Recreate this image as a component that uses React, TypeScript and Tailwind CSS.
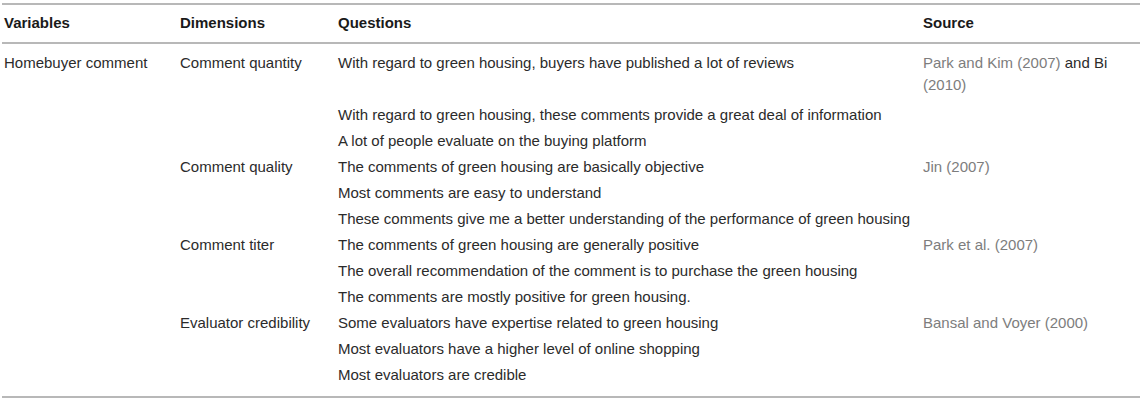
const rows: { variable?: string; dimension?: string; question: string; source?: React.ReactNode; first?: boolean }[] = [
  {
    variable: 'Homebuyer comment',
    dimension: 'Comment quantity',
    question: 'With regard to green housing, buyers have published a lot of reviews',
    source: (
      <>
        <span className="text-[#7d7d7d]">Park and Kim (2007)</span> and Bi <span className="text-[#7d7d7d]">(2010)</span>
      </>
    ),
    first: true,
  },
  { question: 'With regard to green housing, these comments provide a great deal of information' },
  { question: 'A lot of people evaluate on the buying platform' },
  {
    dimension: 'Comment quality',
    question: 'The comments of green housing are basically objective',
    source: <span className="text-[#7d7d7d]">Jin (2007)</span>,
  },
  { question: 'Most comments are easy to understand' },
  { question: 'These comments give me a better understanding of the performance of green housing' },
  {
    dimension: 'Comment titer',
    question: 'The comments of green housing are generally positive',
    source: <span className="text-[#7d7d7d]">Park et al. (2007)</span>,
  },
  { question: 'The overall recommendation of the comment is to purchase the green housing' },
  { question: 'The comments are mostly positive for green housing.' },
  {
    dimension: 'Evaluator credibility',
    question: 'Some evaluators have expertise related to green housing',
    source: <span className="text-[#7d7d7d]">Bansal and Voyer (2000)</span>,
  },
  { question: 'Most evaluators have a higher level of online shopping' },
  { question: 'Most evaluators are credible' },
];

export default function App() {
  return (
    <div className="w-[1143px] h-[402px] bg-white pt-[3px] pl-[2px] font-['Liberation_Sans',Arial,sans-serif] text-[15px] text-[#2b2b2b]">
      <table className="w-[1138px] table-fixed border-collapse">
        <colgroup>
          <col className="w-[176px]" />
          <col className="w-[158px]" />
          <col className="w-[585px]" />
          <col />
        </colgroup>
        <thead>
          <tr className="border-t-2 border-b-2 border-[#b8b8b8] text-left text-[#1a1a1a]">
            <th className="pl-[2px] h-[39px] font-bold">Variables</th>
            <th className="pl-[2px] font-bold">Dimensions</th>
            <th className="pl-[2px] font-bold">Questions</th>
            <th className="pl-[2px] font-bold">Source</th>
          </tr>
        </thead>
        <tbody className="border-b-2 border-[#b8b8b8]">
          {rows.map((r, i) => (
            <tr key={i} className="align-top leading-[22px]">
              <td className={`pl-[2px] ${r.first ? 'pt-[8px] pb-[8px]' : 'pb-[4px]'}`}>{r.variable}</td>
              <td className={`pl-[2px] ${r.first ? 'pt-[8px] pb-[8px]' : 'pb-[4px]'}`}>{r.dimension}</td>
              <td className={`pl-[2px] ${r.first ? 'pt-[8px] pb-[8px]' : 'pb-[4px]'}`}>{r.question}</td>
              <td className={`pl-[2px] pr-[20px] ${r.first ? 'pt-[8px] pb-[8px]' : 'pb-[4px]'}`}>{r.source}</td>
            </tr>
          ))}
          <tr>
            <td colSpan={4} className="h-[7px]" />
          </tr>
        </tbody>
      </table>
    </div>
  );
}
